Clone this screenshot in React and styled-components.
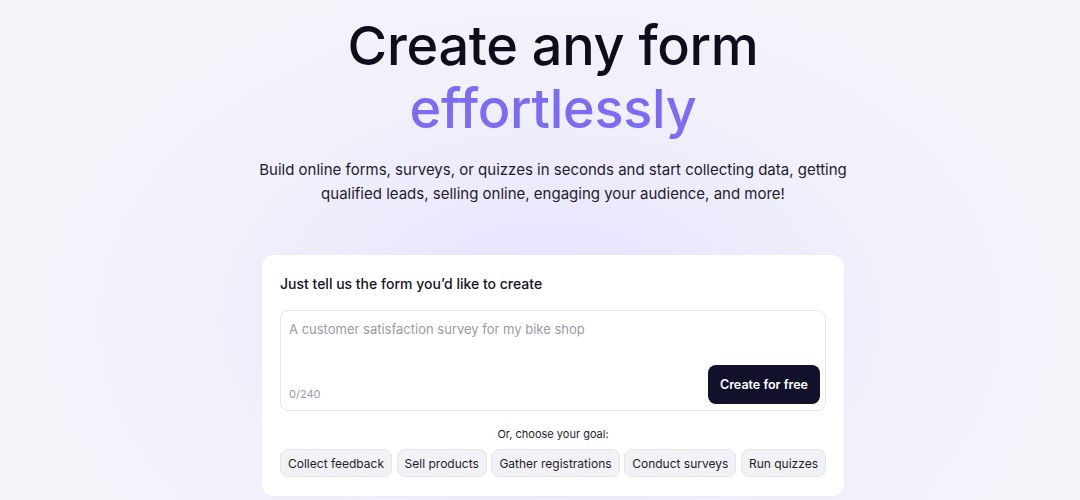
import React, { useState } from 'react';
import styled, { createGlobalStyle } from 'styled-components';

const GlobalStyle = createGlobalStyle`
    * { box-sizing: border-box; }
    html, body {
        margin: 0;
        padding: 0;
        height: 100%;
    }
    body {
        font-family: Inter, "Noto Sans", sans-serif;
        background: #f4f4fa;
        color: #0f0f1f;
        overflow: hidden;
    }
`;

// Фон страницы с мягким фиолетовым свечением
const Page = styled.main`
    min-height: 500px;
    display: flex;
    flex-direction: column;
    align-items: center;
    padding: 14px 0 0 26px;
    background:
        radial-gradient(ellipse 560px 380px at 51% 64%, rgba(226, 222, 255, 0.9), rgba(236, 234, 252, 0.4) 60%, rgba(244, 244, 250, 0) 100%),
        #f4f4fa;
`;

const Headline = styled.h1`
    margin: 0;
    font-size: 54px;
    font-weight: 500;
    line-height: 63px;
    letter-spacing: -0.3px;
    text-align: center;
    color: #0d0d1c;
`;

const Accent = styled.span`
    display: block;
    color: #7b6cf3;
`;

const Lead = styled.p`
    margin: 18px 0 0;
    max-width: 610px;
    font-size: 15px;
    line-height: 24px;
    text-align: center;
    color: #1c1c2b;
`;

const Card = styled.section`
    margin-top: 49px;
    width: 582px;
    background: #fff;
    border-radius: 12px;
    padding: 20px 18px 19px;
    box-shadow: 0 1px 2px rgba(30, 20, 80, 0.03);
`;

const CardTitle = styled.h2`
    margin: 0 0 17px;
    font-size: 14px;
    font-weight: 500;
    line-height: 18px;
    color: #14141f;
`;

const InputBox = styled.div`
    height: 101px;
    border: 1px solid #e6e6ec;
    border-radius: 8px;
    padding: 9px 5px 8px 8px;
    display: flex;
    flex-direction: column;
`;

const Prompt = styled.textarea`
    flex: 1;
    border: none;
    outline: none;
    resize: none;
    padding: 0;
    font-family: inherit;
    font-size: 13px;
    line-height: 18px;
    color: #1c1c2b;
    background: transparent;

    &::placeholder {
        color: #9a9aa6;
    }
`;

const InputFooter = styled.div`
    display: flex;
    align-items: flex-end;
    justify-content: space-between;
`;

const Counter = styled.span`
    font-size: 11px;
    color: #9a9aa6;
    padding-bottom: 1px;
`;

const SubmitButton = styled.button`
    height: 39px;
    padding: 0 12px;
    border: none;
    border-radius: 8px;
    background: #11112b;
    color: #fff;
    font-family: inherit;
    font-size: 12.5px;
    font-weight: 600;
    white-space: nowrap;
    cursor: pointer;
    margin-bottom: -2px;
`;

const GoalLabel = styled.p`
    margin: 16px 0 8px;
    font-size: 11px;
    line-height: 14px;
    text-align: center;
    color: #1c1c2b;
`;

const Chips = styled.div`
    display: flex;
    justify-content: space-between;
`;

const Chip = styled.button`
    height: 28px;
    padding: 0 7px;
    border: 1px solid #e3e3ea;
    border-radius: 8px;
    background: #f2f2f6;
    color: #1c1c2b;
    font-family: inherit;
    font-size: 12px;
    white-space: nowrap;
    cursor: pointer;
`;

const goals = ['Collect feedback', 'Sell products', 'Gather registrations', 'Conduct surveys', 'Run quizzes'];

export default function App() {
    const [text, setText] = useState('');

    return (
        <>
            <GlobalStyle />
            <Page>
                <Headline>
                    Create any form
                    <Accent>effortlessly</Accent>
                </Headline>
                <Lead>
                    Build online forms, surveys, or quizzes in seconds and start collecting data, getting
                    qualified leads, selling online, engaging your audience, and more!
                </Lead>
                <Card>
                    <CardTitle>Just tell us the form you’d like to create</CardTitle>
                    <InputBox>
                        <Prompt
                            value={text}
                            maxLength={240}
                            onChange={(e) => setText(e.target.value)}
                            placeholder="A customer satisfaction survey for my bike shop"
                        />
                        <InputFooter>
                            <Counter>{text.length}/240</Counter>
                            <SubmitButton>Create for free</SubmitButton>
                        </InputFooter>
                    </InputBox>
                    <GoalLabel>Or, choose your goal:</GoalLabel>
                    <Chips>
                        {goals.map((goal) => (
                            <Chip key={goal} onClick={() => setText(goal)}>{goal}</Chip>
                        ))}
                    </Chips>
                </Card>
            </Page>
        </>
    );
}
